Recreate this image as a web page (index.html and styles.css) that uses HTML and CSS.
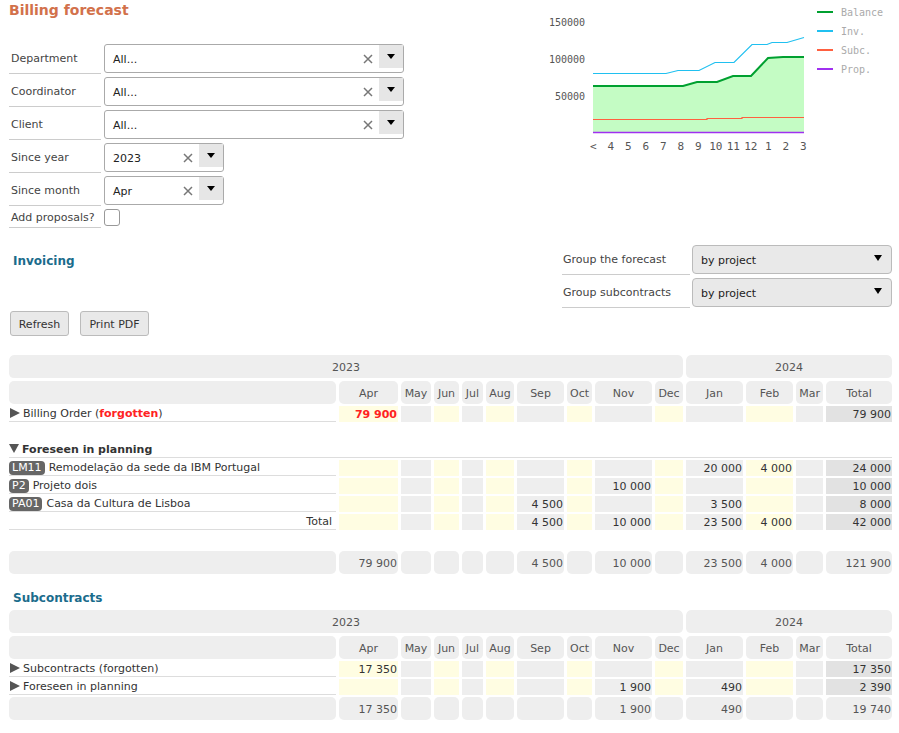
FILE: index.html
```html
<!DOCTYPE html>
<html lang="en">
<head>
    <meta charset="UTF-8">
    <meta name="viewport" content="width=device-width, initial-scale=1.0">
    <title>Billing forecast</title>
    <link rel="stylesheet" href="styles.css">
</head>
<body>
<div class="page">
    <div class="top">
        <div class="filters">
            <h1 class="title">Billing forecast</h1>
            <div class="form">
                <div class="frow">
                    <label class="lbl">Department</label>
                    <div class="sel wide"><span class="val">All...</span><span class="clr"><svg width="10" height="10" viewBox="0 0 10 10"><path d="M1 1L9 9M9 1L1 9"/></svg></span><span class="dd"></span></div>
                </div>
                <div class="frow">
                    <label class="lbl">Coordinator</label>
                    <div class="sel wide"><span class="val">All...</span><span class="clr"><svg width="10" height="10" viewBox="0 0 10 10"><path d="M1 1L9 9M9 1L1 9"/></svg></span><span class="dd"></span></div>
                </div>
                <div class="frow">
                    <label class="lbl">Client</label>
                    <div class="sel wide"><span class="val">All...</span><span class="clr"><svg width="10" height="10" viewBox="0 0 10 10"><path d="M1 1L9 9M9 1L1 9"/></svg></span><span class="dd"></span></div>
                </div>
                <div class="frow">
                    <label class="lbl">Since year</label>
                    <div class="sel short"><span class="val">2023</span><span class="clr"><svg width="10" height="10" viewBox="0 0 10 10"><path d="M1 1L9 9M9 1L1 9"/></svg></span><span class="dd"></span></div>
                </div>
                <div class="frow">
                    <label class="lbl">Since month</label>
                    <div class="sel short"><span class="val">Apr</span><span class="clr"><svg width="10" height="10" viewBox="0 0 10 10"><path d="M1 1L9 9M9 1L1 9"/></svg></span><span class="dd"></span></div>
                </div>
                <div class="frow chk-row">
                    <label class="lbl">Add proposals?</label>
                    <span class="chk"></span>
                </div>
            </div>
        </div>

        <svg class="chart" width="353" height="155" viewBox="0 0 353 155">
            <g class="axis">
                <text x="45" y="25.5" text-anchor="end">150000</text>
                <text x="45" y="62.5" text-anchor="end">100000</text>
                <text x="45" y="99.5" text-anchor="end">50000</text>
            </g>
            <path d="M53,86 H143 L157,82 H177 L193,76 H211 L228,58 L243,57 H264 V133 H53 Z" fill="#c4fcc4"/>
            <path d="M53,73.5 H126 L138,70.5 H159 L175,62.5 H194 L212,44.5 H227 L232,42.5 H247 L264,37.5" fill="none" stroke="#20c0f0" stroke-width="1.2"/>
            <path d="M53,86 H143 L157,82 H177 L193,76 H211 L228,58 L243,57 H264" fill="none" stroke="#00a030" stroke-width="2"/>
            <path d="M53,119.5 H167 V118.5 H202 V117.5 H264" fill="none" stroke="#ff6040" stroke-width="1.2"/>
            <path d="M53,132.5 H264" fill="none" stroke="#a030f0" stroke-width="1.6"/>
            <g class="axis xl" text-anchor="middle">
                <text x="53.3" y="149.5">&lt;</text>
                <text x="70.8" y="149.5">4</text>
                <text x="88.3" y="149.5">5</text>
                <text x="105.8" y="149.5">6</text>
                <text x="123.3" y="149.5">7</text>
                <text x="140.8" y="149.5">8</text>
                <text x="158.3" y="149.5">9</text>
                <text x="175.8" y="149.5">10</text>
                <text x="193.3" y="149.5">11</text>
                <text x="210.8" y="149.5">12</text>
                <text x="228.3" y="149.5">1</text>
                <text x="245.8" y="149.5">2</text>
                <text x="263.3" y="149.5">3</text>
            </g>
            <g class="legend">
                <path d="M277,12 H293" stroke="#00a030" stroke-width="2"/>
                <text x="301" y="15.5">Balance</text>
                <path d="M277,31 H293" stroke="#20c0f0" stroke-width="2"/>
                <text x="301" y="34.5">Inv.</text>
                <path d="M277,50 H293" stroke="#ff6040" stroke-width="2"/>
                <text x="301" y="53.5">Subc.</text>
                <path d="M277,69 H293" stroke="#a030f0" stroke-width="2"/>
                <text x="301" y="72.5">Prop.</text>
            </g>
        </svg>
    </div>

    <div class="section">
        <h2 class="sec">Invoicing</h2>
        <div class="gform">
            <div class="frow">
                <label class="lbl">Group the forecast</label>
                <div class="gsel">by project<span class="arr"></span></div>
            </div>
            <div class="frow">
                <label class="lbl">Group subcontracts</label>
                <div class="gsel">by project<span class="arr"></span></div>
            </div>
        </div>
    </div>

    <div class="buttons">
        <button class="btn refresh">Refresh</button>
        <button class="btn pdf">Print PDF</button>
    </div>

    <table class="fc">
        <colgroup>
            <col class="c-l"><col class="c-apr"><col class="c-may"><col class="c-jun"><col class="c-jul"><col class="c-aug"><col class="c-sep"><col class="c-oct"><col class="c-nov"><col class="c-dec"><col class="c-jan"><col class="c-feb"><col class="c-mar"><col class="c-tot">
        </colgroup>
        <thead>
            <tr class="yr"><th colspan="10">2023</th><th colspan="4">2024</th></tr>
            <tr><th></th><th>Apr</th><th>May</th><th>Jun</th><th>Jul</th><th>Aug</th><th>Sep</th><th>Oct</th><th>Nov</th><th>Dec</th><th>Jan</th><th>Feb</th><th>Mar</th><th>Total</th></tr>
        </thead>
        <tbody>
            <tr>
                <td class="l"><span class="tri-r"></span>Billing Order (<b class="red">forgotten</b>)</td>
                <td class="y red b">79 900</td><td class="g"></td><td class="y"></td><td class="g"></td><td class="y"></td><td class="g"></td><td class="y"></td><td class="g"></td><td class="y"></td><td class="g"></td><td class="y"></td><td class="g"></td><td class="t">79 900</td>
            </tr>
            <tr class="gap"><td colspan="14"></td></tr>
            <tr class="grp"><td colspan="14"><span class="tri-d"></span>Foreseen in planning</td></tr>
            <tr>
                <td class="l"><span class="badge">LM11</span>Remodelação da sede da IBM Portugal</td>
                <td class="y"></td><td class="g"></td><td class="y"></td><td class="g"></td><td class="y"></td><td class="g"></td><td class="y"></td><td class="g"></td><td class="y"></td><td class="g">20 000</td><td class="y">4 000</td><td class="g"></td><td class="t">24 000</td>
            </tr>
            <tr>
                <td class="l"><span class="badge">P2</span>Projeto dois</td>
                <td class="y"></td><td class="g"></td><td class="y"></td><td class="g"></td><td class="y"></td><td class="g"></td><td class="y"></td><td class="g">10 000</td><td class="y"></td><td class="g"></td><td class="y"></td><td class="g"></td><td class="t">10 000</td>
            </tr>
            <tr>
                <td class="l"><span class="badge">PA01</span>Casa da Cultura de Lisboa</td>
                <td class="y"></td><td class="g"></td><td class="y"></td><td class="g"></td><td class="y"></td><td class="g">4 500</td><td class="y"></td><td class="g"></td><td class="y"></td><td class="g">3 500</td><td class="y"></td><td class="g"></td><td class="t">8 000</td>
            </tr>
            <tr>
                <td class="l tot">Total</td>
                <td class="y"></td><td class="g"></td><td class="y"></td><td class="g"></td><td class="y"></td><td class="g">4 500</td><td class="y"></td><td class="g">10 000</td><td class="y"></td><td class="g">23 500</td><td class="y">4 000</td><td class="g"></td><td class="t">42 000</td>
            </tr>
            <tr class="gap2"><td colspan="14"></td></tr>
        </tbody>
        <tfoot>
            <tr><td></td><td>79 900</td><td></td><td></td><td></td><td></td><td>4 500</td><td></td><td>10 000</td><td></td><td>23 500</td><td>4 000</td><td></td><td>121 900</td></tr>
        </tfoot>
    </table>

    <h2 class="sec sub">Subcontracts</h2>

    <table class="fc fc2">
        <colgroup>
            <col class="c-l"><col class="c-apr"><col class="c-may"><col class="c-jun"><col class="c-jul"><col class="c-aug"><col class="c-sep"><col class="c-oct"><col class="c-nov"><col class="c-dec"><col class="c-jan"><col class="c-feb"><col class="c-mar"><col class="c-tot">
        </colgroup>
        <thead>
            <tr class="yr"><th colspan="10">2023</th><th colspan="4">2024</th></tr>
            <tr><th></th><th>Apr</th><th>May</th><th>Jun</th><th>Jul</th><th>Aug</th><th>Sep</th><th>Oct</th><th>Nov</th><th>Dec</th><th>Jan</th><th>Feb</th><th>Mar</th><th>Total</th></tr>
        </thead>
        <tbody>
            <tr>
                <td class="l"><span class="tri-r"></span>Subcontracts (forgotten)</td>
                <td class="y">17 350</td><td class="g"></td><td class="y"></td><td class="g"></td><td class="y"></td><td class="g"></td><td class="y"></td><td class="g"></td><td class="y"></td><td class="g"></td><td class="y"></td><td class="g"></td><td class="t">17 350</td>
            </tr>
            <tr>
                <td class="l"><span class="tri-r"></span>Foreseen in planning</td>
                <td class="y"></td><td class="g"></td><td class="y"></td><td class="g"></td><td class="y"></td><td class="g"></td><td class="y"></td><td class="g">1 900</td><td class="y"></td><td class="g">490</td><td class="y"></td><td class="g"></td><td class="t">2 390</td>
            </tr>
        </tbody>
        <tfoot>
            <tr><td></td><td>17 350</td><td></td><td></td><td></td><td></td><td></td><td></td><td>1 900</td><td></td><td>490</td><td></td><td></td><td>19 740</td></tr>
        </tfoot>
    </table>
</div>
</body>
</html>
```

FILE: styles.css
```css
body {
    margin: 0;
    font-family: "DejaVu Sans", Verdana, sans-serif;
    font-size: 11px;
    color: #333;
    background: #fff;
}

.page {
    padding: 0 6px 0 9px;
}

/* top: filters + chart */
.top {
    display: flex;
    justify-content: space-between;
    height: 229px;
}

.filters {
    width: 395px;
}

.title {
    margin: 0;
    padding-top: 2px;
    font-size: 14px;
    line-height: 17px;
    color: #d2714b;
    font-weight: bold;
}

.form {
    margin-top: 22px;
}

.frow {
    display: flex;
    height: 33px;
}

.lbl {
    box-sizing: border-box;
    width: 92px;
    height: 33px;
    flex: none;
    padding: 3px 0 0 2px;
    border-bottom: 1px solid #ccc;
    display: flex;
    align-items: center;
    color: #444;
}

.sel {
    box-sizing: border-box;
    margin: 3px 0 0 3px;
    height: 29px;
    border: 1px solid #aaa;
    border-radius: 3px;
    background: #fff;
    display: flex;
    align-items: flex-start;
}

.sel.wide {
    width: 300px;
}

.sel.short {
    width: 120px;
}

.val {
    flex: 1;
    padding: 2px 0 0 8px;
    line-height: 25px;
    color: #222;
}

.clr {
    width: 11px;
    height: 27px;
    margin-right: 6px;
    display: flex;
    align-items: center;
    justify-content: center;
}

.clr path {
    stroke: #777;
    stroke-width: 1.5;
}

.dd {
    position: relative;
    width: 24px;
    height: 23px;
    background: #e6e6e6;
}

.dd::after {
    content: "";
    position: absolute;
    left: 8px;
    top: 9px;
    border-top: 5px solid #000;
    border-left: 4px solid transparent;
    border-right: 4px solid transparent;
}

.chk-row {
    height: 22px;
}

.chk-row .lbl {
    height: 22px;
    padding-top: 1px;
}

.chk {
    box-sizing: border-box;
    margin: 3px 0 0 3px;
    width: 16px;
    height: 17px;
    border: 1px solid #999;
    border-radius: 3px;
    background: #fff;
}

.chart {
    flex: none;
    display: block;
}

.chart text {
    font-family: "DejaVu Sans Mono", monospace;
    font-size: 10px;
}

.chart .xl text {
    font-size: 11px;
}

.chart .axis text {
    fill: #555;
}

.chart .legend text {
    fill: #aaa;
}

/* invoicing header */
.section {
    display: flex;
    justify-content: space-between;
    margin-top: 13px;
}

.sec {
    margin: 12px 0 0 4px;
    font-size: 12px;
    line-height: 15px;
    color: #1b6c8c;
    font-weight: bold;
}

.gform {
    width: 330px;
    margin-right: 1px;
}

.gform .lbl {
    width: 128px;
    padding-left: 1px;
}

.gsel {
    box-sizing: border-box;
    position: relative;
    margin: 3px 0 0 2px;
    width: 200px;
    height: 29px;
    padding: 2px 0 0 8px;
    line-height: 25px;
    border: 1px solid #bbb;
    border-radius: 4px;
    background: #e9e9e9;
    color: #222;
}

.arr {
    position: absolute;
    right: 9px;
    top: 9px;
    border-top: 6px solid #000;
    border-left: 4px solid transparent;
    border-right: 4px solid transparent;
}

.buttons {
    display: flex;
    gap: 11px;
    margin-top: 3px;
    padding-left: 1px;
}

.btn {
    box-sizing: border-box;
    height: 25px;
    padding: 1px 0 0;
    border: 1px solid #bbb;
    border-radius: 3px;
    background: #e9e9e9;
    font-family: "DejaVu Sans", Verdana, sans-serif;
    font-size: 11px;
    color: #333;
}

.refresh {
    width: 59px;
}

.pdf {
    width: 69px;
}

/* forecast tables */
.fc {
    margin: 17px 0 0 -3px;
    width: 889px;
    table-layout: fixed;
    border-collapse: separate;
    border-spacing: 3px 2px;
}

.fc2 {
    margin-top: 0;
}

.c-l { width: 327px; }
.c-apr { width: 59px; }
.c-may { width: 30px; }
.c-jun { width: 25px; }
.c-jul { width: 21px; }
.c-aug { width: 28px; }
.c-sep { width: 47px; }
.c-oct { width: 25px; }
.c-nov { width: 57px; }
.c-dec { width: 28px; }
.c-jan { width: 57px; }
.c-feb { width: 47px; }
.c-mar { width: 27px; }
.c-tot { width: 66px; }

.fc th {
    box-sizing: border-box;
    height: 23px;
    padding: 1px 0 0;
    background: #eee;
    border-radius: 5px;
    font-weight: normal;
    color: #555;
    text-align: center;
    white-space: nowrap;
}

.fc tr.yr th {
    height: 24px;
    border-bottom: 1px solid transparent;
    background-clip: padding-box;
}

.fc td {
    box-sizing: border-box;
    height: 16px;
    padding: 1px 1px 0 0;
    line-height: 14px;
    text-align: right;
    white-space: nowrap;
    color: #333;
    overflow: hidden;
}

.fc td.l {
    padding: 1px 0 0;
    text-align: left;
    border-bottom: 1px solid #ddd;
}

.fc td.tot {
    text-align: right;
    padding-right: 4px;
}

.fc td.y { background: #fffde2; }
.fc td.g { background: #eee; }
.fc td.t { background: #e2e2e2; }

.fc .red {
    color: #ff2222;
    font-weight: bold;
}

.fc tr.gap td {
    height: 16px;
}

.fc tr.gap2 td {
    height: 17px;
}

.fc tr.grp td {
    text-align: left;
    font-weight: bold;
    border-bottom: 1px solid #ddd;
    padding: 1px 0 0;
}

.tri-r {
    display: inline-block;
    vertical-align: -1px;
    margin: 0 3px 0 1px;
    border-left: 10px solid #555;
    border-top: 5px solid transparent;
    border-bottom: 5px solid transparent;
}

.tri-d {
    display: inline-block;
    vertical-align: 0;
    margin: 0 3px 0 0;
    border-top: 9px solid #555;
    border-left: 5.5px solid transparent;
    border-right: 5.5px solid transparent;
}

.badge {
    display: inline-block;
    vertical-align: top;
    margin-right: 4px;
    padding: 0 3px;
    line-height: 14px;
    border-radius: 4px;
    background: #666;
    color: #fff;
}

.fc tfoot td {
    height: 23px;
    padding-top: 2px;
    line-height: 16px;
    background: #eee;
    border-radius: 5px;
    color: #555;
}

.sub {
    margin: 15px 0 2px 4px;
}
```
